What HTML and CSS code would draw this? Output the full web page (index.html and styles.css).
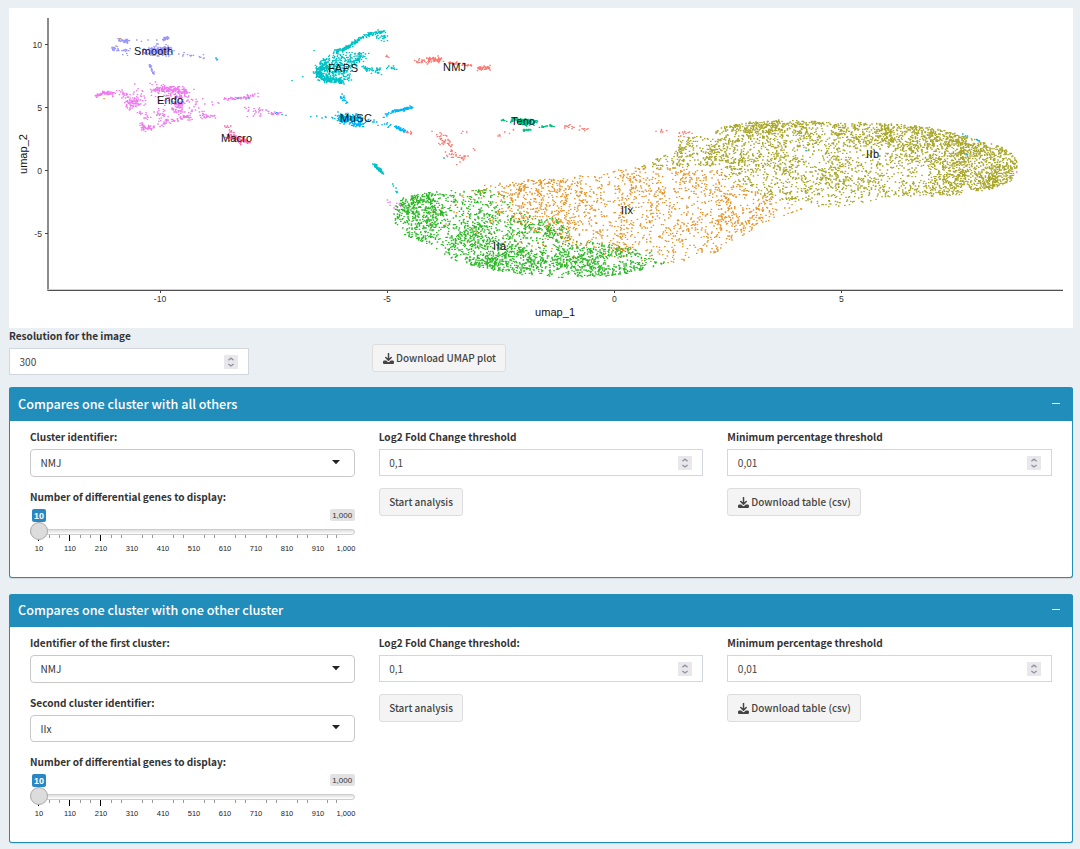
FILE: index.html
```html
<!DOCTYPE html>
<html lang="en">
<head>
<meta charset="utf-8">
<title>UMAP cluster comparison</title>
<link rel="stylesheet" href="styles.css">
</head>
<body>
<svg class="defs" width="0" height="0">
  <symbol id="download" viewBox="0 0 512 512"><path d="M256 20v290M130 205l126 126 126-126" fill="none" stroke="#444" stroke-width="68" stroke-linecap="round" stroke-linejoin="round"/><path d="M64 352h87l60 60c25 25 65 25 90 0l60-60h87c35 0 64 29 64 64v32c0 35-29 64-64 64H64c-35 0-64-29-64-64v-32c0-35 29-64 64-64z"/></symbol>
  <symbol id="spin" viewBox="0 0 14 14"><path d="M4.400 5.300 7 3.200l2.600 2.100M4.400 8.900 7 11l2.600-2.100" fill="none" stroke="#92929c" stroke-width="1.300"/></symbol>
  <symbol id="caret" viewBox="0 0 8 5"><path d="M0 0h8L4 4.300z"/></symbol>
</svg>
<main class="page">
  <section class="plot">
    <svg class="umap" viewBox="9 8 1064 320" width="1064" height="320">
      <g id="points"></g>
      <path d="M48 18V290.500" stroke="#8c8c8c" stroke-width="2"/>
      <path d="M47.500 289.500H1063" stroke="#d0d0d0" stroke-width="1"/>
      <path d="M47.500 290.500H1063" stroke="#505050" stroke-width="1"/>
      <path d="M45 44.500h3M45 107.500h3M45 170.500h3M45 233.500h3M160.500 290v3M387.500 290v3M614.500 290v3M841.500 290v3" stroke="#444"/>
      <g class="tick end"><text x="42" y="48">10</text><text x="42" y="111">5</text><text x="42" y="174">0</text><text x="42" y="237">-5</text></g>
      <g class="tick mid"><text x="160" y="302">-10</text><text x="387" y="302">-5</text><text x="614.500" y="302">0</text><text x="841.500" y="302">5</text></g>
      <text class="axis" x="535" y="316" textLength="40">umap_1</text>
      <text class="axis" transform="translate(27 174) rotate(-90)" textLength="40">umap_2</text>
      <g class="names">
        <text x="134" y="55" textLength="39">Smooth</text>
        <text x="157" y="104" textLength="26">Endo</text>
        <text x="221" y="142" textLength="31">Macro</text>
        <text x="328" y="72" textLength="30">FAPS</text>
        <text x="443" y="71" textLength="23">NMJ</text>
        <text x="340" y="122" textLength="32">MuSC</text>
        <text x="511" y="125" textLength="24">Teno</text>
        <text x="866" y="158" textLength="13">IIb</text>
        <text x="621" y="214" textLength="12">IIx</text>
        <text x="493" y="250" textLength="13">IIa</text>
      </g>
    </svg>
  </section>

  <section class="export">
    <div class="resolution">
      <label class="lbl">Resolution for the image</label>
      <div class="num"><span>300</span><svg class="spin"><use href="#spin"/></svg></div>
    </div>
    <button class="btn"><svg class="dl"><use href="#download"/></svg>Download UMAP plot</button>
  </section>

  <section class="box first">
    <header><h3>Compares one cluster with all others</h3><i class="minus"></i></header>
    <div class="cols">
      <div>
        <label class="lbl">Cluster identifier:</label>
        <div class="select"><span>NMJ</span><svg class="caret"><use href="#caret"/></svg></div>
        <label class="lbl">Number of differential genes to display:</label>
        <div class="slider"></div>
      </div>
      <div>
        <label class="lbl">Log2 Fold Change threshold</label>
        <div class="num"><span>0,1</span><svg class="spin"><use href="#spin"/></svg></div>
        <button class="btn">Start analysis</button>
      </div>
      <div>
        <label class="lbl">Minimum percentage threshold</label>
        <div class="num"><span>0,01</span><svg class="spin"><use href="#spin"/></svg></div>
        <button class="btn"><svg class="dl"><use href="#download"/></svg>Download table (csv)</button>
      </div>
    </div>
  </section>

  <section class="box second">
    <header><h3>Compares one cluster with one other cluster</h3><i class="minus"></i></header>
    <div class="cols">
      <div>
        <label class="lbl">Identifier of the first cluster:</label>
        <div class="select"><span>NMJ</span><svg class="caret"><use href="#caret"/></svg></div>
        <label class="lbl">Second cluster identifier:</label>
        <div class="select short"><span>IIx</span><svg class="caret"><use href="#caret"/></svg></div>
        <label class="lbl">Number of differential genes to display:</label>
        <div class="slider"></div>
      </div>
      <div>
        <label class="lbl">Log2 Fold Change threshold:</label>
        <div class="num"><span>0,1</span><svg class="spin"><use href="#spin"/></svg></div>
        <button class="btn">Start analysis</button>
      </div>
      <div>
        <label class="lbl">Minimum percentage threshold</label>
        <div class="num"><span>0,01</span><svg class="spin"><use href="#spin"/></svg></div>
        <button class="btn"><svg class="dl"><use href="#download"/></svg>Download table (csv)</button>
      </div>
    </div>
  </section>
</main>
<script src="app.js"></script>
</body>
</html>
```
FILE: styles.css
```css
* { box-sizing: border-box; }
body {
  margin: 0;
  background: #eaeff4;
  color: #333;
  font-family: "Noto Sans CJK SC", "Noto Sans", sans-serif;
  font-size: 10.080px;
  line-height: 14px;
}
.defs { position: absolute; }
.page { padding: 8px 7px 0 9px; height: 849px; overflow: hidden; }
.plot { height: 320px; background: #fff; }
.umap { display: block; }
.umap text { font-family: "Liberation Sans", Arial, sans-serif; fill: #111; }
.tick text { font-size: 8.6px; fill: #333; }
.end { text-anchor: end; }
.mid { text-anchor: middle; }
.umap .axis { font-size: 11px; }
.umap .names text { font-size: 11px; }

.lbl { display: block; height: 14px; line-height: 14px; font-weight: 700; white-space: nowrap; }
.export { display: flex; height: 59px; }
.resolution { width: 240px; padding-top: 1px; margin-right: 123px; }
.resolution .num { margin-top: 5px; }
.export .btn { margin-top: 16px; width: 134px; }
.num, .select {
  display: flex;
  align-items: center;
  justify-content: space-between;
  background: #fff;
  color: #444;
}
.num { height: 27px; border: 1px solid #d2d6de; padding: 0 10px 0 9.500px; }
.select { height: 28px; border: 1px solid #c8c8c8; border-radius: 4px; padding: 0 14px 0 9.500px; color: #333; }
.select.short { height: 27px; }
.num span, .select.short span { padding-top: 1px; }
.spin { width: 14px; height: 14px; background: #e8e7ec; }
.caret { width: 8px; height: 5px; fill: #222; margin-bottom: 2px; }
.btn {
  display: flex;
  align-items: center;
  height: 28px;
  padding: 0 9px 0 9.500px;
  border: 1px solid #ddd;
  border-radius: 3px;
  background: #f4f4f4;
  color: #444;
  font: inherit;
  font-size: 9.950px;
  font-weight: 500;
  white-space: nowrap;
}
.dl { flex: none; width: 11px; height: 11px; margin-right: 2.500px; fill: #444; }

.box {
  border: 1px solid #208dbb;
  border-top: 0;
  border-radius: 3px;
  background: #fff;
  box-shadow: 0 1px 1px rgba(0, 0, 0, .1);
}
.box header {
  display: flex;
  justify-content: space-between;
  height: 34px;
  margin: 0 -1px;
  padding: 0 13px 0 9px;
  background: #208dbb;
  border-radius: 3px 3px 0 0;
  color: #fff;
}
.box h3 { margin: 0; font-size: 12.640px; line-height: 34px; font-weight: 500; }
.minus { width: 8px; height: 1px; margin-top: 16px; background: #fff; }
.first { height: 191px; margin-bottom: 16px; }
.second { height: 249px; }
.second header { height: 33px; }
.second h3 { line-height: 32px; }
.second .minus { margin-top: 15px; }
.cols { display: grid; grid-template-columns: repeat(3, 1fr); gap: 24px; padding: 9px 20px 0; }
.cols .num, .cols .select { margin-top: 5px; }
.cols .select { margin-bottom: 13px; }
.cols .btn { margin-top: 12px; }

.slider { position: relative; height: 50px; margin-top: 5px; }
.slider .track {
  position: absolute; left: 0; right: 0; top: 20px; height: 6px;
  border: 1px solid #ccc; border-radius: 4px;
  background: linear-gradient(#dedede, #fff);
}
.slider .handle {
  position: absolute; left: 0; top: 13px; width: 18px; height: 18px;
  border: 1px solid #aaa; border-radius: 50%; background: #dcdcdc;
}
.slider .from, .slider .max {
  position: absolute; border-radius: 2px;
  font-family: "Liberation Sans", Arial, sans-serif; text-align: center;
}
.slider .from { left: 2px; top: 0; width: 14px; height: 13px; background: #2a87c4; color: #fff; font-size: 9px; font-weight: 700; line-height: 14px; }
.slider .max { right: 0; top: 0; width: 25px; height: 12px; background: #e2e2e2; color: #333; font-size: 8px; line-height: 13px; }
.slider .grid { position: absolute; left: 0; top: 26px; overflow: visible; }
.slider .grid text { font-family: "Liberation Sans", Arial, sans-serif; font-size: 7.500px; fill: #222; text-anchor: middle; }
```
FILE: app.js
```javascript
// Sliders: scale with ticks, track, handle and value badges
const labels = ['10', '110', '210', '310', '410', '510', '610', '710', '810', '910', '1,000'];
document.querySelectorAll('.slider').forEach(el => {
  let minor = '', text = '';
  [49.5, 59.5, 80.5, 90.5, 111.5, 121.5, 142.5, 152.5, 173.5, 183.5, 204.5, 214.5, 235.5, 245.5, 266.5, 276.5, 297.5, 307.5, 327.5, 336.5]
    .forEach(x => { minor += `M${x - 30} 0v3`; });
  labels.forEach((l, i) => { text += `<text x="${i < 10 ? 9 + i * 31 : 316}" y="16">${l}</text>`; });
  el.innerHTML = `<svg class="grid" width="325" height="24"><path d="${minor}" stroke="#999"/>
    <path d="M8.500 0v6M39.500 0v6M70.500 0v6" stroke="#000"/>${text}</svg>
    <div class="track"></div><div class="handle"></div><span class="from">10</span><span class="max">1,000</span>`;
});

// Seeded generator so the scatter is stable between loads
let seed = 20231;
const rnd = () => {
  seed = (seed + 0x6D2B79F5) | 0;
  let t = Math.imul(seed ^ (seed >>> 15), 1 | seed);
  t = (t + Math.imul(t ^ (t >>> 7), 61 | t)) ^ t;
  return ((t ^ (t >>> 14)) >>> 0) / 4294967296;
};
const gauss = () => (rnd() + rnd() + rnd() + rnd() - 2) * 1.6;
const paths = {};
const dot = (c, x, y) => {
  x = Math.round(x * 1.5) / 1.5; y = Math.round(y * 1.5) / 1.5;
  (paths[c] = paths[c] || []).push(`M${x.toFixed(1)} ${y.toFixed(1)}h1.500v1.350h-1.500z`);
};

// Smooth value noise gives the uneven density of the large clusters
const hash = (i, j) => { const s = Math.sin(i * 127.1 + j * 311.7) * 43758.5453; return s - Math.floor(s); };
const noise = (x, y, s) => {
  x /= s; y /= s;
  const i = Math.floor(x), j = Math.floor(y), u = x - i, v = y - j;
  return (hash(i, j) * (1 - u) + hash(i + 1, j) * u) * (1 - v) + (hash(i, j + 1) * (1 - u) + hash(i + 1, j + 1) * u) * v;
};
const inside = (p, x, y) => {
  let r = false;
  for (let i = 0, j = p.length - 1; i < p.length; j = i++) {
    const [a, b] = p[i], [c, d] = p[j];
    if ((b > y) !== (d > y) && x < (c - a) * (y - b) / (d - b) + a) r = !r;
  }
  return r;
};
const region = (c, p, n, density) => {
  const xs = p.map(q => q[0]), ys = p.map(q => q[1]);
  const x0 = Math.min(...xs), x1 = Math.max(...xs), y0 = Math.min(...ys), y1 = Math.max(...ys);
  while (n > 0) {
    const x = x0 + rnd() * (x1 - x0), y = y0 + rnd() * (y1 - y0);
    const k = Math.pow(noise(x, y, 10), 1.3) + .22;
    if (inside(p, x, y) && rnd() < k * density(x, y)) { dot(c, x, y); n--; }
  }
};
const bump = (x, y, cx, cy, rx, ry) => Math.exp(-(((x - cx) / rx) ** 2) - ((y - cy) / ry) ** 2);

const olive = '#a9a72b', orange = '#e5962c', green = '#2fb82a';
region(olive, [[633,170],[650,160],[663,155],[676,148],[677,134],[700,136],[713,138],[716,127],[745,122],[780,119],[810,120],[830,122],[855,122],[885,123],[910,124],[930,127],[950,131],[975,138],[1000,146],[1015,155],[1017,170],[1011,180],[990,189],[960,194],[930,196],[890,196],[860,204],[835,207],[815,205],[790,200],[765,196],[750,187],[730,178],[722,165],[690,167],[660,168]], 4200,
  (x, y) => .26 + .45 * bump(x, y, 770, 122, 60, 12) + .65 * bump(x, y, 988, 166, 42, 30) + .5 * bump(x, y, 940, 140, 40, 18) + .4 * bump(x, y, 880, 128, 70, 14) + .12 * bump(x, y, 700, 155, 30, 15));
region(orange, [[455,194],[480,185],[520,180],[560,177],[590,174],[620,169],[640,167],[665,168],[718,170],[745,187],[775,198],[800,206],[812,208],[790,213],[770,219],[750,230],[735,240],[715,252],[695,253],[680,262],[655,264],[640,256],[600,250],[560,243],[520,225],[480,205]], 1800,
  (x, y) => .35 + .5 * bump(x, y, 530, 186, 30, 9) + .2 * bump(x, y, 730, 215, 30, 20));
region(green, [[398,198],[420,193],[450,190],[485,189],[494,200],[505,214],[545,222],[560,235],[600,242],[650,252],[665,262],[650,269],[610,275],[560,277],[520,274],[480,267],[450,259],[430,244],[405,235],[392,220],[395,205]], 2400,
  (x, y) => .32 + .4 * bump(x, y, 422, 212, 28, 22) + .4 * bump(x, y, 510, 258, 60, 16) + .25 * bump(x, y, 600, 268, 50, 10));
region(green, [[485,189],[500,192],[520,212],[565,220],[570,240],[520,225]], 70, () => .4);
region(orange, [[400,200],[440,193],[500,215],[560,240],[650,260],[560,265],[450,240]], 90, () => .4);
region(olive, [[720,168],[745,187],[760,196],[730,185]], 15, () => .4);

// Strands of the small clusters: from, to, spread, count
const strands = {
  '#9a96ff': [[119,39,127,41,1.2,36],[112,48,117,48,1,16],[122,51,130,47,2,14],[145,51,170,50,2.6,150],[155,47,166,48,1.5,30],[162,39,168,37,.9,22],[149,64,153,73,.8,24],[178,53,216,58,.9,16],[133,41,160,40,1.2,4]],
  '#ee7cf0': [[94,96,102,93,.7,28],[102,92,114,93,1.1,42],[118,90,128,98,2,24],[128,104,138,101,3,70],[132,90,145,100,4,20],[150,88,185,90,1.7,110],[150,86,190,93,3,60],[158,94,185,100,4,50],[175,93,180,112,4.500,90],[135,111,150,117,1.5,16],[155,112,165,117,3,32],[141,122,143,128,1.2,22],[142,128,152,127,1.2,38],[155,126,180,118,1.3,26],[180,117,190,117,1.2,26],[190,108,206,116,2.500,20],[204,114,214,116,1.5,22],[192,100,214,100,2.500,12],[222,99,245,97,.7,40],[245,97,257,94,1.200,18],[244,109,262,112,2.500,20],[260,110,280,113,1.400,20],[387,201,400,204,2.500,11]],
  '#ff67ab': [[222,124,235,133,1.500,12],[226,136,250,142,1.500,75],[230,136,240,140,1.500,40]],
  '#00c1c6': [[335,51,345,48,1.100,40],[343,49,358,39,1,80],[358,38,370,33,.8,35],[370,33,384,31,.6,35],[374,35,385,38,2.500,24],[316,73,326,60,2.200,110],[316,73,328,80,1.800,90],[326,79,342,81,1.500,100],[322,70,345,69,4.800,190],[328,60,350,58,2.500,45],[335,54,366,57,3,55],[350,66,359,56,2,40],[360,67,380,71,2,42],[385,66,396,69,1,12],[340,77,350,79,1,12],[373,163,382,173,.7,55],[388,178,396,192,1,6],[291,80,291,80,0,1],[302,76,302,76,0,1],[313,50,313,50,0,1]],
  '#00b4f8': [[340,95,346,104,1.300,20],[338,118,362,119,2.600,210],[350,123,362,125,1.400,40],[365,121,390,125,2,18],[382,116,390,112,1,12],[392,111,411,107,.8,65],[394,126,405,131,.8,48],[310,115,335,117,.7,8],[215,58,217,58,.3,5],[230,98,250,97,1,2],[272,112,285,114,1,4],[950,130,992,143,1,6],[805,150,805,150,0,1],[966,153,966,153,0,1]],
  '#fb7b74': [[415,61,425,60,1,18],[425,59.5,441,59,1.700,62],[448,62,472,65,.8,46],[478,68,490,67,1.200,42],[384,55,388,57,.8,5],[437,135,448,145,3,36],[448,150,460,158,3,30],[462,157,468,154,1,9],[406,132,414,133,.6,8],[447,137,468,130,1.500,5],[473,144,473,154,1,2],[497,135,513,130,1.200,7],[563,125,586,129,1.300,22],[636,128,668,131,1,6],[677,134,692,131,1.500,12],[1016,171,1016,171,0,2]],
  '#00bd80': [[500,120,506,120,1,7],[512,119,535,122,1.400,110],[520,123,530,120,1.600,30],[522,130,530,129,.6,30],[535,127,554,125,.8,16],[443,157,443,157,0,1]]
};
for (const c in strands) for (const [a, b, x, y, s, n] of strands[c])
  for (let i = 0; i < n; i++) { const t = rnd(); dot(c, a + (x - a) * t + gauss() * s, b + (y - b) * t + gauss() * s); }
[[113,47],[115,45],[120,38],[103,98],[112,96]].forEach(([x, y]) => dot(orange, x, y));

document.getElementById('points').innerHTML = Object.keys(paths)
  .map(c => `<path d="${paths[c].join('')}" fill="${c}"/>`).join('');
```
